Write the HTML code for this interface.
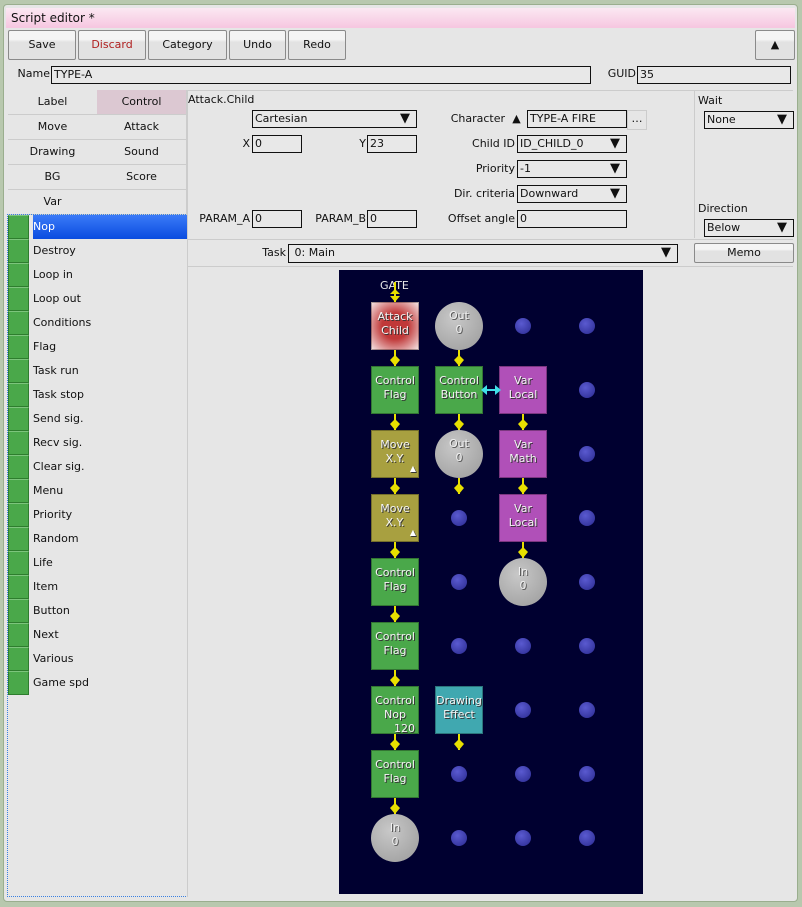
<!DOCTYPE html>
<html><head><meta charset="utf-8"><style>
*{box-sizing:border-box;margin:0;padding:0}
body{width:802px;height:907px;background:#b8c8ae;position:relative;overflow:hidden;font-family:"DejaVu Sans","Liberation Sans",sans-serif;font-size:11px;color:#111}
.a{position:absolute}
.win{left:3px;top:4px;width:795px;height:898px;background:#e6e6e6;border:1px solid #9aae8e;border-radius:4px}
.title{left:6px;top:8px;width:789px;height:20px;background:linear-gradient(#fbe8f2,#f6c6e0);font-size:12px;padding:3px 5px}
.btn{height:30px;top:30px;background:linear-gradient(#f4f4f4 0,#f4f4f4 30%,#e2e2e2 40%,#e2e2e2);border:1px solid #8a8a8a;border-radius:2px;text-align:center;line-height:28px;font-size:11px}
.in{background:#e8e8e8;border:1px solid #111;height:18px;padding:0 2px;line-height:16px;white-space:nowrap;overflow:hidden}
.lbl{text-align:right;line-height:18px}
.cat{width:90px;height:25px;text-align:center;line-height:24px;border-right:1px solid #ccc;border-bottom:1px solid #ccc;background:#e6e6e6}
.dd:after{content:"▼";position:absolute;right:6px;top:0;font-size:13px}
.li{left:8px;width:179px;height:24px;line-height:24px}
.li i{position:absolute;left:0;top:0;width:21px;height:24px;background:#4aa84a;border:1px solid #2e7d2e;border-top-color:#7cc47c}
.li span{position:absolute;left:25px}
.blk{width:48px;height:48px;color:#f4f4f4;text-align:center;font-size:11px;line-height:14px;padding-top:7px;text-shadow:1px 1px 0 #333;border:1px solid rgba(0,0,0,.3)}
.circ{width:48px;height:48px;border-radius:50%;background:radial-gradient(circle at 40% 35%,#c8c8c8,#9a9a9a);color:#f0f0f0;text-align:center;line-height:14px;padding-top:7px;text-shadow:1px 1px 0 #555}
.dot{width:16px;height:16px;border-radius:50%;background:radial-gradient(circle at 40% 35%,#5a5ad0,#2a2a90)}
</style></head><body>
<div class="a win"></div>
<div class="a title">Script editor *</div>
<div class="a btn" style="left:8px;width:68px">Save</div>
<div class="a btn" style="left:78px;width:68px;color:#b02020">Discard</div>
<div class="a btn" style="left:148px;width:79px">Category</div>
<div class="a btn" style="left:229px;width:57px">Undo</div>
<div class="a btn" style="left:288px;width:58px">Redo</div>
<div class="a btn" style="left:755px;width:40px">▲</div>
<div class="a lbl" style="left:10px;top:65px;width:40px">Name</div>
<div class="a in" style="left:51px;top:66px;width:540px">TYPE-A</div>
<div class="a lbl" style="left:600px;top:65px;width:36px">GUID</div>
<div class="a in" style="left:637px;top:66px;width:154px">35</div>
<div class="a" style="left:8px;top:90px;width:785px;height:1px;background:#ccc"></div>
<div class="a cat" style="left:8px;top:90px">Label</div>
<div class="a cat" style="left:97px;top:90px;background:#dcc8d2">Control</div>
<div class="a cat" style="left:8px;top:115px">Move</div>
<div class="a cat" style="left:97px;top:115px">Attack</div>
<div class="a cat" style="left:8px;top:140px">Drawing</div>
<div class="a cat" style="left:97px;top:140px">Sound</div>
<div class="a cat" style="left:8px;top:165px">BG</div>
<div class="a cat" style="left:97px;top:165px">Score</div>
<div class="a cat" style="left:8px;top:190px">Var</div>
<div class="a cat" style="left:97px;top:190px"></div>
<div class="a" style="left:7px;top:214px;width:181px;height:683px;border:1px dotted #3a80e0"></div>
<div class="a" style="left:187px;top:90px;width:1px;height:807px;background:#ccc"></div>
<div class="a" style="left:188px;top:93px">Attack.Child</div>
<div class="a in dd" style="left:252px;top:110px;width:165px">Cartesian</div>
<div class="a lbl" style="left:230px;top:135px;width:20px">X</div>
<div class="a in" style="left:252px;top:135px;width:50px">0</div>
<div class="a lbl" style="left:340px;top:135px;width:26px">Y</div>
<div class="a in" style="left:367px;top:135px;width:50px">23</div>
<div class="a lbl" style="left:190px;top:210px;width:60px">PARAM_A</div>
<div class="a in" style="left:252px;top:210px;width:50px">0</div>
<div class="a lbl" style="left:305px;top:210px;width:61px">PARAM_B</div>
<div class="a in" style="left:367px;top:210px;width:50px">0</div>
<div class="a lbl" style="left:430px;top:110px;width:75px">Character</div>
<div class="a" style="left:507px;top:110px;width:19px;height:19px;text-align:center;line-height:18px">▲</div>
<div class="a in" style="left:527px;top:110px;width:100px">TYPE-A FIRE</div>
<div class="a" style="left:627px;top:110px;width:20px;height:20px;border:1px solid #ccc;text-align:center;line-height:16px">…</div>
<div class="a lbl" style="left:430px;top:135px;width:85px">Child ID</div>
<div class="a in dd" style="left:517px;top:135px;width:110px">ID_CHILD_0</div>
<div class="a lbl" style="left:430px;top:160px;width:85px">Priority</div>
<div class="a in dd" style="left:517px;top:160px;width:110px">-1</div>
<div class="a lbl" style="left:420px;top:185px;width:95px">Dir. criteria</div>
<div class="a in dd" style="left:517px;top:185px;width:110px">Downward</div>
<div class="a lbl" style="left:420px;top:210px;width:95px">Offset angle</div>
<div class="a in" style="left:517px;top:210px;width:110px">0</div>
<div class="a" style="left:694px;top:90px;width:1px;height:148px;background:#ccc"></div>
<div class="a" style="left:698px;top:94px">Wait</div>
<div class="a in dd" style="left:704px;top:111px;width:90px">None</div>
<div class="a" style="left:698px;top:202px">Direction</div>
<div class="a in dd" style="left:704px;top:219px;width:90px">Below</div>
<div class="a" style="left:188px;top:239px;width:605px;height:1px;background:#ccc"></div>
<div class="a lbl" style="left:230px;top:244px;width:56px">Task</div>
<div class="a in dd" style="left:288px;top:244px;width:390px;height:19px">&nbsp;0: Main</div>
<div class="a btn" style="left:694px;top:243px;width:100px;height:20px;line-height:18px;font-size:11px">Memo</div>
<div class="a" style="left:188px;top:266px;width:605px;height:1px;background:#ccc"></div>
<div class="a" style="left:339px;top:270px;width:304px;height:624px;background:#000030"></div>
<div id="list"></div>
<div id="cv"></div>
<script>
var items=["Nop","Destroy","Loop in","Loop out","Conditions","Flag","Task run","Task stop","Send sig.","Recv sig.","Clear sig.","Menu","Priority","Random","Life","Item","Button","Next","Various","Game spd"];
var h="";items.forEach(function(t,i){h+='<div class="a li" style="top:'+(215+i*24)+'px"><i></i><span>'+t+'</span></div>';});
h='<div class="a" style="left:33px;top:215px;width:154px;height:24px;background:linear-gradient(#3a7af8,#0a4ce0)"></div>'+h;
document.getElementById('list').innerHTML=h;
document.querySelector('.li span').style.color='#fff';
var cx=[371,435,499,563],ry=[302,366,430,494,558,622,686,750,814];
var col={g:'#4aa84a',r:'#c85050',o:'#a8a040',p:'#b050b8',t:'#40a8b0'};
var g=[
[['r','Attack<br>Child'],['c','Out<br>0'],0,0],
[['g','Control<br>Flag'],['g','Control<br>Button'],['p','Var<br>Local'],0],
[['o','Move<br>X.Y.',1],['c','Out<br>0'],['p','Var<br>Math'],0],
[['o','Move<br>X.Y.',1],0,['p','Var<br>Local'],0],
[['g','Control<br>Flag'],0,['c','In<br>0'],0],
[['g','Control<br>Flag'],0,0,0],
[['g','Control<br>Nop<br><span style="position:absolute;right:3px;top:35px">120</span>'],['t','Drawing<br>Effect'],0,0],
[['g','Control<br>Flag'],0,0,0],
[['c','In<br>0'],0,0,0]];
var s='<div class="a" style="left:380px;top:279px;color:#e8e8e8;font-size:11px">GATE</div>';
g.forEach(function(r,ri){r.forEach(function(c,ci){var x=cx[ci],y=ry[ri];
if(!c){s+='<div class="a dot" style="left:'+(x+16)+'px;top:'+(y+16)+'px"></div>';}
else if(c[0]=='c'){s+='<div class="a circ" style="left:'+x+'px;top:'+y+'px">'+c[1]+'</div>';}
else{var bg=c[0]=='r'?'radial-gradient(#c03838 40%,#f4e0e0)':col[c[0]];s+='<div class="a blk" style="left:'+x+'px;top:'+y+'px;background:'+bg+'">'+c[1]+(c[2]?'<span style="position:absolute;right:2px;bottom:1px;font-size:8px;color:#fff">▲</span>':'')+'</div>';}
});});
function arr(x,y1,y2){var H=y2-y1;return '<svg class="a" style="left:'+(x-5)+'px;top:'+y1+'px" width="10" height="'+H+'"><rect x="4" y="0" width="2" height="'+H+'" fill="#e8e000"/><path d="M0 '+(H-6)+'L10 '+(H-6)+'L5 '+H+'Z" fill="#e8e000"/><path d="M0 5L10 5L5 0Z" fill="#e8e000" transform="translate(0,'+Math.round(H/2-3)+')"/></svg>';}
var v=[[0,282,302],[0,350,366],[0,414,430],[0,478,494],[0,542,558],[0,606,622],[0,670,686],[0,734,750],[0,798,814],[1,350,366],[1,414,430],[1,478,494],[2,414,430],[2,478,494],[2,542,558],[1,734,750]];
v.forEach(function(a){s+=arr(cx[a[0]]+24,a[1],a[2]);});
s+='<svg class="a" style="left:481px;top:384px" width="20" height="12"><rect x="3" y="5" width="14" height="2" fill="#40e0e8"/><path d="M0 6L6 1L6 11Z M20 6L14 1L14 11Z" fill="#40e0e8"/></svg>';
document.getElementById('cv').innerHTML=s;
</script>
</body></html>
